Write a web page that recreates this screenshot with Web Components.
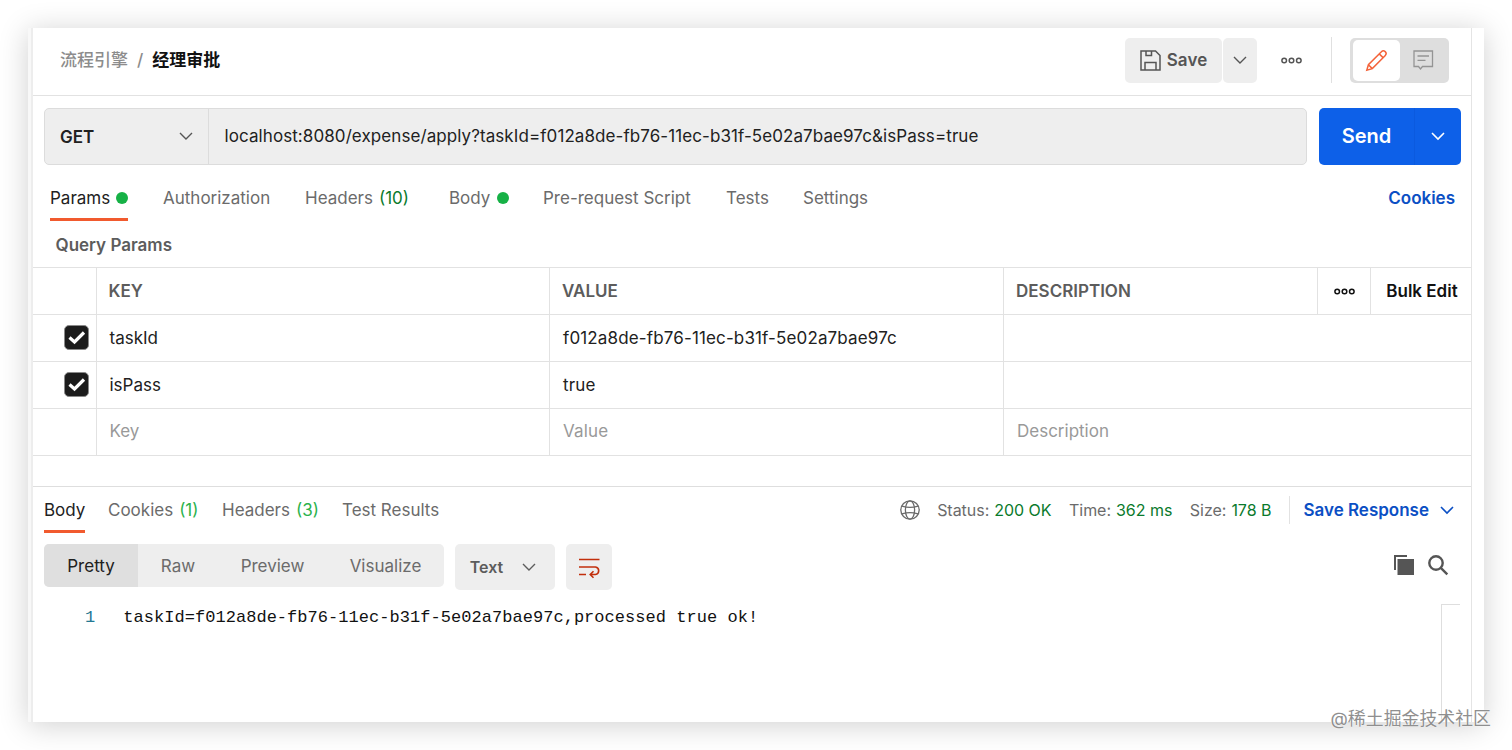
<!DOCTYPE html>
<html lang="zh">
<head>
<meta charset="utf-8">
<title>经理审批</title>
<style>
    body {
        margin: 0;
        width: 1512px;
        height: 750px;
        overflow: hidden;
        background: #fff;
        font: 17px/22px Inter, "Noto Sans CJK SC", sans-serif;
        color: #212121;
    }
</style>
</head>
<body>
<api-window></api-window>
<script>
const ICONS = {
    save: `<path d="M1 1h14.500L20 5.500V20H1zM6 1v4.500h5.500V1M5 20v-7.500h11V20"/>`,
    chevron: `<path d="M1 1l6 6 6-6"/>`,
    dots: `<circle cx="3.200" cy="3.500" r="2.300"/><circle cx="10.500" cy="3.500" r="2.300"/><circle cx="17.800" cy="3.500" r="2.300"/>`,
    pencil: `<path d="M.8 20.200l1.600-5.500L15.400 1.700a2.500 2.500 0 0 1 3.900 3.700L6.300 18.600zM13.200 3.900l3.900 3.700M2.400 14.700l3.900 3.900"/>`,
    comment: `<path d="M1 1h18.500v15.500H9.500L7.500 19l-2-2.500H1zM4.500 6h11.500M4.500 10.300h8"/>`,
    globe: `<circle cx="10" cy="10" r="9.200"/><ellipse cx="10" cy="10" rx="4.600" ry="9.200"/><path d="M2 6.200c4.500 1.400 11.500 1.400 16 0M2 13.800c4.500-1.400 11.500-1.400 16 0"/>`,
    wrap: `<path d="M0 1.500h20.500M0 9h16.500a3.800 3.800 0 0 1 0 7.500h-5M0 16.500h7M14.500 13.200l-3.300 3.300 3.300 3.300"/>`,
    copy: `<path d="M1 15V1h12" stroke-width="2"/><path d="M3.500 4h16.500v16H3.500z" fill="currentColor" stroke="none"/>`,
    search: `<circle cx="8" cy="8" r="6.700"/><path d="M12.800 12.800l6.500 6.500"/>`,
    check: `<path d="M1.500 6.500l5 4.500L16 1.500"/>`
};

class apiIcon extends HTMLElement {
    constructor() {
        super();
        this.attachShadow({mode: 'open'});
    }

    connectedCallback() {
        const w = this.getAttribute('w');
        const h = this.getAttribute('h');
        this.shadowRoot.innerHTML = `
            <style>
                :host {
                    display: block;
                    flex: none;
                    width: ${w}px;
                    height: ${h}px;
                }

                svg {
                    display: block;
                    overflow: visible;
                }
            </style>
            <svg width="${w}" height="${h}" viewBox="0 0 ${w} ${h}" fill="none" stroke="currentColor"
                stroke-width="${this.getAttribute('stroke') || 1.4}">${ICONS[this.getAttribute('name')]}</svg>
        `;
    }
}

class apiTab extends HTMLElement {
    constructor() {
        super();
        this.attachShadow({mode: 'open'});
    }

    connectedCallback() {
        this.shadowRoot.innerHTML = `
            <style>
                :host {
                    display: flex;
                    color: #6b6b6b;
                    white-space: nowrap;
                }

                :host([active]) {
                    color: #212121;
                }

                #label {
                    display: flex;
                    align-items: center;
                    box-sizing: border-box;
                    padding-top: 2px;
                    border-bottom: 3px solid transparent;
                }

                :host([active]) #label {
                    border-color: #f15a2e;
                }

                #count {
                    margin-left: 6px;
                    color: var(--count, #0a7a2c);
                }

                #dot {
                    width: 12px;
                    height: 12px;
                    margin-left: 7px;
                    border-radius: 50%;
                    background: #16b146;
                }

                :host([active]) #dot {
                    margin-left: 6px;
                }
            </style>
            <div id="label">
                <slot></slot>
                ${this.hasAttribute('count') ? `<span id="count">(${this.getAttribute('count')})</span>` : ''}
                ${this.hasAttribute('dot') ? '<span id="dot"></span>' : ''}
            </div>
        `;
    }
}

class apiHeader extends HTMLElement {
    constructor() {
        super();
        this.attachShadow({mode: 'open'});
    }

    connectedCallback() {
        this.shadowRoot.innerHTML = `
            <style>
                :host {
                    display: flex;
                    align-items: center;
                    height: 67px;
                    padding: 0 22px 3px 27px;
                    box-sizing: border-box;
                    color: #555;
                }

                #crumbs {
                    display: flex;
                    flex: 1;
                    gap: 9px;
                    color: #8c8c8c;
                    font-weight: 500;
                }

                b {
                    font-weight: 700;
                    color: #111;
                }

                .btn {
                    display: flex;
                    align-items: center;
                    justify-content: center;
                    height: 45px;
                    background: #eee;
                    font-weight: 600;
                }

                #save {
                    width: 97px;
                    gap: 7px;
                    border-radius: 5px;
                    letter-spacing: 0.100px;
                }

                #more {
                    width: 34px;
                    margin: 0 24px 0 1px;
                    border-radius: 5px;
                }

                #line {
                    width: 1px;
                    height: 46px;
                    margin: 0 18px 0 29px;
                    background: #e0e0e0;
                }

                #toggle {
                    display: flex;
                    width: 99px;
                    height: 45px;
                    padding: 2px 3px;
                    box-sizing: border-box;
                    border-radius: 5px;
                    background: #dedede;
                }

                #toggle div {
                    display: flex;
                    flex: 1;
                    align-items: center;
                    justify-content: center;
                    border-radius: 5px;
                    color: #949494;
                }

                #toggle .on {
                    background: #fff;
                    color: #f4633a;
                }
            </style>
            <div id="crumbs"><span>流程引擎</span><span>/</span><b>经理审批</b></div>
            <div class="btn" id="save"><api-icon name="save" w="20" h="21" stroke="1.500"></api-icon>Save</div>
            <div class="btn" id="more"><api-icon name="chevron" w="14" h="8"></api-icon></div>
            <api-icon name="dots" w="21" h="7" stroke="1.500"></api-icon>
            <div id="line"></div>
            <div id="toggle">
                <div class="on"><api-icon name="pencil" w="20" h="21" stroke="1.500"></api-icon></div>
                <div><api-icon name="comment" w="20" h="20" stroke="1.300"></api-icon></div>
            </div>
        `;
    }
}

class apiUrlBar extends HTMLElement {
    constructor() {
        super();
        this.attachShadow({mode: 'open'});
    }

    connectedCallback() {
        this.shadowRoot.innerHTML = `
            <style>
                :host {
                    display: flex;
                    gap: 12px;
                    height: 56.500px;
                    padding: 0 10px 0 11px;
                }

                #field {
                    display: flex;
                    flex: 1;
                    box-sizing: border-box;
                    border: 1px solid #dcdcdc;
                    border-radius: 5px;
                    background: #eee;
                }

                #method {
                    display: flex;
                    align-items: center;
                    justify-content: space-between;
                    width: 164px;
                    padding: 2px 15px 0;
                    box-sizing: border-box;
                    border-right: 1px solid #dcdcdc;
                    font-weight: 600;
                }

                #method api-icon {
                    margin-bottom: 2px;
                    color: #555;
                }

                #url {
                    align-self: center;
                    padding: 0 0 1px 15.500px;
                    letter-spacing: 0.080px;
                }

                #send {
                    display: flex;
                    width: 142px;
                    border-radius: 5px;
                    background: #0d60e8;
                    color: #fff;
                    font-size: 20px;
                    font-weight: 600;
                }

                #send div {
                    display: flex;
                    align-items: center;
                    justify-content: center;
                    width: 95px;
                    padding-bottom: 1px;
                }

                #send #drop {
                    width: 47px;
                    box-sizing: border-box;
                    border-left: 1px solid #0b5adf;
                }
            </style>
            <div id="field">
                <div id="method">GET<api-icon name="chevron" w="14" h="8"></api-icon></div>
                <div id="url"><slot></slot></div>
            </div>
            <div id="send"><div>Send</div><div id="drop"><api-icon name="chevron" w="14" h="8" stroke="1.600"></api-icon></div></div>
        `;
    }
}

class apiParams extends HTMLElement {
    constructor() {
        super();
        this.attachShadow({mode: 'open'});
    }

    connectedCallback() {
        const rows = [
            ['taskId', 'f012a8de-fb76-11ec-b31f-5e02a7bae97c'],
            ['isPass', 'true']
        ];
        this.shadowRoot.innerHTML = `
            <style>
                :host {
                    display: block;
                    border-top: 1px solid #e2e2e2;
                }

                .row {
                    display: grid;
                    grid-template-columns: 63px 453px 454px 1fr;
                    height: 47px;
                    box-sizing: border-box;
                    border-bottom: 1px solid #e2e2e2;
                }

                .head {
                    grid-template-columns: 63px 453px 454px 314px 53px 1fr;
                    font-weight: 600;
                    color: #5c5c5c;
                }

                .row > * {
                    display: flex;
                    align-items: center;
                    padding-left: 13px;
                    border-left: 1px solid #e2e2e2;
                }

                .row > :nth-child(3) {
                    letter-spacing: 0.140px;
                }

                .head > * {
                    padding-left: 12px;
                }

                .head > :nth-child(3) {
                    letter-spacing: 0;
                }

                .row > :nth-child(2) {
                    padding-left: 12.500px;
                }

                .head > :nth-child(2) {
                    padding-left: 11.500px;
                }

                .row > :first-child {
                    justify-content: flex-end;
                    padding: 0 7px 1px 0;
                    border: 0;
                }

                .head .mid {
                    justify-content: center;
                    padding: 0;
                    color: #111;
                }

                .head .edit {
                    padding-left: 2px;
                }

                .new {
                    color: #999;
                }

                .new > * {
                    padding-bottom: 3px;
                }

                .box {
                    display: flex;
                    align-items: center;
                    justify-content: center;
                    width: 25px;
                    height: 25px;
                    box-sizing: border-box;
                    border: 1px solid #8a8a8a;
                    border-radius: 5px;
                    background: #1c1c1c;
                    color: #fff;
                }
            </style>
            <div class="row head">
                <span></span><span>KEY</span><span>VALUE</span><span>DESCRIPTION</span>
                <span class="mid"><api-icon name="dots" w="21" h="7" stroke="1.500"></api-icon></span>
                <span class="mid edit">Bulk Edit</span>
            </div>
            ${rows.map(([key, value]) => `
                <div class="row">
                    <span><i class="box"><api-icon name="check" w="17" h="13" stroke="3.200"></api-icon></i></span>
                    <span>${key}</span><span>${value}</span><span></span>
                </div>`).join('')}
            <div class="row new"><span></span><span>Key</span><span>Value</span><span>Description</span></div>
        `;
    }
}

class apiResponse extends HTMLElement {
    constructor() {
        super();
        this.attachShadow({mode: 'open'});
    }

    connectedCallback() {
        this.shadowRoot.innerHTML = `
            <style>
                :host {
                    display: flex;
                    flex-direction: column;
                    border-top: 1px solid #dedede;
                }

                #top {
                    display: flex;
                    height: 46px;
                    padding: 0 18px 0 11px;
                }

                #tabs {
                    display: grid;
                    flex: 1;
                    grid-template-columns: 64px 114px 120px auto;
                    justify-content: start;
                    --count: #2bb24c;
                }

                #meta {
                    display: flex;
                    align-items: center;
                    gap: 17.500px;
                    font-size: 16px;
                    color: #6b6b6b;
                }

                #meta > span {
                    letter-spacing: -0.030px;
                }

                em {
                    margin-left: 5px;
                    font-style: normal;
                    color: #0a7a2c;
                }

                #saveas {
                    display: flex;
                    align-items: center;
                    gap: 11px;
                    height: 28px;
                    padding-left: 13.500px;
                    border-left: 1px solid #e2e2e2;
                    font-size: 17px;
                    font-weight: 600;
                    color: #0b4fc4;
                }

                #saveas api-icon {
                    margin-right: -1px;
                }

                #tools {
                    display: flex;
                    gap: 11px;
                    height: 46px;
                    padding: 11px 23px 0 11px;
                    color: #6b6b6b;
                }

                #views {
                    display: grid;
                    grid-template-columns: 94px 80px 109px 117px;
                    height: 43px;
                    border-radius: 5px;
                    background: #eee;
                    overflow: hidden;
                }

                #views span {
                    display: flex;
                    align-items: center;
                    justify-content: center;
                }

                #views .on {
                    background: #dfdfdf;
                    color: #212121;
                }

                .btn {
                    display: flex;
                    align-items: center;
                    justify-content: center;
                    width: 46px;
                    border-radius: 5px;
                    background: #eee;
                    color: #c22f0c;
                }

                #lang {
                    width: 100px;
                    gap: 19px;
                    padding-right: 4px;
                    box-sizing: border-box;
                    color: #5c5c5c;
                    font-weight: 600;
                    font-size: 16px;
                }

                #actions {
                    display: flex;
                    flex: 1;
                    align-items: center;
                    justify-content: flex-end;
                    gap: 14px;
                    padding-bottom: 5px;
                    color: #555;
                }

                #body {
                    display: flex;
                    flex: 1;
                    padding: 14px 11px 0 52px;
                    font-family: "Liberation Mono", monospace;
                    font-size: 17px;
                    letter-spacing: 0.040px;
                    color: #111;
                }

                #body pre {
                    flex: 1;
                    margin: 3px 0 0 28px;
                    font: inherit;
                }

                #num {
                    margin-top: 3px;
                    color: #237893;
                }

                #map {
                    width: 18px;
                    border: 1px solid #dedede;
                    border-width: 1px 0 0 1px;
                }
            </style>
            <div id="top">
                <div id="tabs">
                    <api-tab active>Body</api-tab>
                    <api-tab count="1">Cookies</api-tab>
                    <api-tab count="3">Headers</api-tab>
                    <api-tab>Test Results</api-tab>
                </div>
                <div id="meta">
                    <api-icon name="globe" w="20" h="20" stroke="1.300"></api-icon>
                    <span>Status:<em>200 OK</em></span>
                    <span>Time:<em>362 ms</em></span>
                    <span>Size:<em>178 B</em></span>
                    <div id="saveas">Save Response<api-icon name="chevron" w="14" h="8" stroke="1.600"></api-icon></div>
                </div>
            </div>
            <div id="tools">
                <div id="views"><span class="on">Pretty</span><span>Raw</span><span>Preview</span><span>Visualize</span></div>
                <div class="btn" id="lang">Text<api-icon name="chevron" w="14" h="8"></api-icon></div>
                <div class="btn"><api-icon name="wrap" w="21" h="19" stroke="1.600"></api-icon></div>
                <div id="actions">
                    <api-icon name="copy" w="20" h="20"></api-icon>
                    <api-icon name="search" w="20" h="20" stroke="2.400"></api-icon>
                </div>
            </div>
            <div id="body"><span id="num">1</span><pre><slot></slot></pre><div id="map"></div></div>
        `;
    }
}

class apiWindow extends HTMLElement {
    constructor() {
        super();
        this.attachShadow({mode: 'open'});
    }

    connectedCallback() {
        this.shadowRoot.innerHTML = `
            <style>
                :host {
                    display: block;
                    position: relative;
                    padding: 28px;
                }

                #frame {
                    display: flex;
                    width: 1456px;
                    height: 693.500px;
                    background: #fff;
                    box-shadow: 0 3px 28px rgba(0, 0, 0, 0.190);
                }

                #gutter {
                    width: 3px;
                    background: #f8f8f8;
                    border-right: 2px solid #ededed;
                }

                #main {
                    display: flex;
                    flex-direction: column;
                    width: 1438px;
                    border-right: 1px solid #e4e4e4;
                }

                api-url-bar {
                    padding-top: 12px;
                    border-top: 1px solid #e2e2e2;
                }

                #tabs {
                    display: grid;
                    grid-template-columns: 113px 142px 144px 94px 183px 77px 1fr auto;
                    height: 46px;
                    margin: 10.500px 16px 0 17px;
                }

                #cookies {
                    align-self: center;
                    padding-bottom: 1px;
                    font-weight: 600;
                    color: #0b4fc4;
                }

                h2 {
                    margin: 13px 0 11px 22.500px;
                    font: inherit;
                    font-weight: 600;
                    color: #5c5c5c;
                }

                api-response {
                    flex: 1;
                    margin-top: 30px;
                }

                #mark {
                    position: absolute;
                    right: 21px;
                    bottom: 20px;
                    font-size: 17.900px;
                    color: #8f8f8f;
                    text-shadow: 0 0 1px #fff, 0 0 1px #fff;
                }
            </style>
            <div id="frame">
                <div id="gutter"></div>
                <div id="main">
                    <api-header></api-header>
                    <api-url-bar>localhost:8080/expense/apply?taskId=f012a8de-fb76-11ec-b31f-5e02a7bae97c&amp;isPass=true</api-url-bar>
                    <div id="tabs">
                        <api-tab active dot>Params</api-tab>
                        <api-tab>Authorization</api-tab>
                        <api-tab count="10">Headers</api-tab>
                        <api-tab dot>Body</api-tab>
                        <api-tab>Pre-request Script</api-tab>
                        <api-tab>Tests</api-tab>
                        <api-tab>Settings</api-tab>
                        <span id="cookies">Cookies</span>
                    </div>
                    <h2>Query Params</h2>
                    <api-params></api-params>
                    <api-response>taskId=f012a8de-fb76-11ec-b31f-5e02a7bae97c,processed true ok!</api-response>
                </div>
            </div>
            <div id="mark">@稀土掘金技术社区</div>
        `;
    }
}

customElements.define('api-icon', apiIcon);
customElements.define('api-tab', apiTab);
customElements.define('api-header', apiHeader);
customElements.define('api-url-bar', apiUrlBar);
customElements.define('api-params', apiParams);
customElements.define('api-response', apiResponse);
customElements.define('api-window', apiWindow);
</script>
</body>
</html>
